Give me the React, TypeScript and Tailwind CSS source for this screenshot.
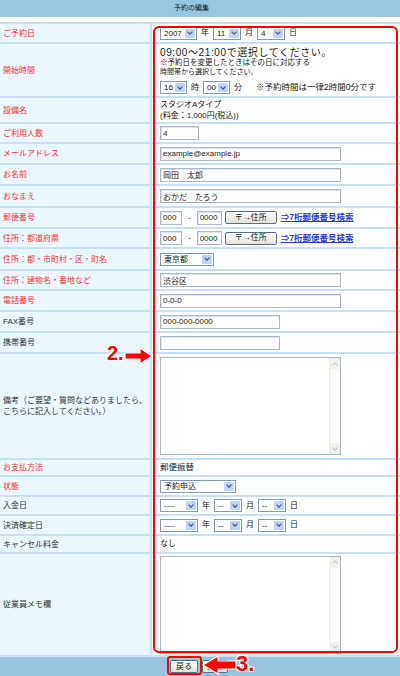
import React from 'react';

const FONT = "font-['Liberation_Sans','Noto_Sans_CJK_JP',sans-serif]";

function Sel({ w, v }: { w: string; v: string }) {
  return (
    <div className={`${w} h-[13px] flex items-stretch border border-[#7f9db9] bg-white shrink-0`}>
      <span className="flex-1 pl-[3px] text-[8px] leading-[11px] text-[#222] whitespace-nowrap overflow-hidden">{v}</span>
      <span className="w-[10px] m-px flex items-center justify-center bg-[#c3d3fb] rounded-[1px]">
        <svg width="6" height="4" viewBox="0 0 6 4">
          <path d="M0.6 0.6 L3 3.2 L5.4 0.6" stroke="#4b5f88" strokeWidth="1.3" fill="none" />
        </svg>
      </span>
    </div>
  );
}

function Inp({ w, v = '' }: { w: string; v?: string }) {
  return (
    <input
      readOnly
      value={v}
      className={`${w} h-[14px] px-[2px] border border-[#a7b8cc] shadow-[inset_1px_1px_0_#dde5ee] bg-white text-[8px] text-[#222] outline-none shrink-0`}
    />
  );
}

function Btn({ children, w }: { children: React.ReactNode; w: string }) {
  return (
    <div className={`${w} h-[13px] flex items-center justify-center rounded-[2px] border border-[#5a6f8e] bg-gradient-to-b from-white to-[#e4e2d6] text-[8px] text-[#222] shrink-0`}>
      {children}
    </div>
  );
}

function Unit({ t }: { t: string }) {
  return <span className="text-[8px] text-[#222] px-[4px]">{t}</span>;
}

function TextArea() {
  return (
    <div className="w-[181px] h-[98px] border border-[#a7b8cc] bg-white flex justify-end">
      <div className="w-[11px] h-full bg-[#fbfbf9] border-l border-[#eeeeea] flex flex-col justify-between">
        <div className="h-[11px] bg-[#f1f1ed] flex items-center justify-center">
          <svg width="6" height="4" viewBox="0 0 6 4"><path d="M0.6 3.4 L3 0.8 L5.4 3.4" stroke="#b9bcc4" strokeWidth="1" fill="none" /></svg>
        </div>
        <div className="h-[11px] bg-[#f1f1ed] flex items-center justify-center">
          <svg width="6" height="4" viewBox="0 0 6 4"><path d="M0.6 0.6 L3 3.2 L5.4 0.6" stroke="#b9bcc4" strokeWidth="1" fill="none" /></svg>
        </div>
      </div>
    </div>
  );
}

function Zip() {
  return (
    <div className="flex items-center">
      <Inp w="w-[22px]" v="000" />
      <span className="text-[8px] text-[#222] px-[6px]">-</span>
      <Inp w="w-[25px]" v="0000" />
      <div className="w-[3px]" />
      <Btn w="w-[52px]">〒→住所</Btn>
      <span className="ml-[4px] text-[8.5px] font-bold text-[#2a3be0] underline whitespace-nowrap">⇒7桁郵便番号検索</span>
    </div>
  );
}

function DateSel({ y, m, d, yw }: { y: string; m: string; d: string; yw: string }) {
  return (
    <div className="flex items-center">
      <Sel w={yw} v={y} />
      <Unit t="年" />
      <Sel w="w-[28px]" v={m} />
      <Unit t="月" />
      <Sel w="w-[28px]" v={d} />
      <Unit t="日" />
    </div>
  );
}

type Row = { label: React.ReactNode; red?: boolean; h: string; content: React.ReactNode };

const rows: Row[] = [
  { label: 'ご予約日', red: true, h: 'h-[18px]', content: <DateSel y="2007" m="11" d="4" yw="w-[37px]" /> },
  {
    label: '開始時間',
    red: true,
    h: 'h-[52px]',
    content: (
      <div className="flex flex-col self-start pt-[3px] text-[#222]">
        <div className="text-[10px] tracking-[0.6px] leading-[12px] whitespace-nowrap">09:00～21:00で選択してください。</div>
        <div className="text-[7.5px] leading-[8px] whitespace-nowrap">※予約日を変更したときはその日に対応する</div>
        <div className="text-[7px] leading-[10px] whitespace-nowrap">時間帯から選択してください。</div>
        <div className="flex items-center mt-[4px]">
          <Sel w="w-[27px]" v="16" />
          <Unit t="時" />
          <Sel w="w-[27px]" v="00" />
          <Unit t="分" />
          <span className="ml-[10px] text-[8.5px] whitespace-nowrap">※予約時間は一律2時間0分です</span>
        </div>
      </div>
    ),
  },
  {
    label: '設備名',
    red: true,
    h: 'h-[24px]',
    content: (
      <div className="text-[8px] leading-[11px] text-[#222]">
        <div>スタジオAタイプ</div>
        <div>(料金：1,000円(税込))</div>
      </div>
    ),
  },
  { label: 'ご利用人数', red: true, h: 'h-[18px]', content: <Inp w="w-[39px]" v="4" /> },
  { label: 'メールアドレス', red: true, h: 'h-[19px]', content: <Inp w="w-[181px]" v="example@example.jp" /> },
  { label: 'お名前', red: true, h: 'h-[19px]', content: <Inp w="w-[181px]" v="岡田　太郎" /> },
  { label: 'おなまえ', red: true, h: 'h-[20px]', content: <Inp w="w-[181px]" v="おかだ　たろう" /> },
  { label: '郵便番号', red: true, h: 'h-[19px]', content: <Zip /> },
  { label: '住所：都道府県', red: true, h: 'h-[18px]', content: <Zip /> },
  { label: '住所：都・市町村・区・町名', red: true, h: 'h-[20px]', content: <Sel w="w-[54px]" v="東京都" /> },
  { label: '住所：建物名・番地など', red: true, h: 'h-[18px]', content: <Inp w="w-[181px]" v="渋谷区" /> },
  { label: '電話番号', red: true, h: 'h-[19px]', content: <Inp w="w-[181px]" v="0-0-0" /> },
  { label: 'FAX番号', h: 'h-[19px]', content: <Inp w="w-[120px]" v="000-000-0000" /> },
  { label: '携帯番号', h: 'h-[19px]', content: <Inp w="w-[120px]" /> },
  {
    label: (
      <>
        備考（ご要望・質問などありましたら、
        <br />
        こちらに記入してください。）
      </>
    ),
    h: 'h-[104px]',
    content: <TextArea />,
  },
  { label: 'お支払方法', red: true, h: 'h-[15px]', content: <span className="text-[8.5px] text-[#222]">郵便振替</span> },
  { label: '状態', red: true, h: 'h-[18px]', content: <Sel w="w-[76px]" v="予約申込" /> },
  { label: '入金日', h: 'h-[17px]', content: <DateSel y="----" m="--" d="--" yw="w-[38px]" /> },
  { label: '決済確定日', h: 'h-[18px]', content: <DateSel y="----" m="--" d="--" yw="w-[38px]" /> },
  { label: 'キャンセル料金', h: 'h-[16px]', content: <span className="text-[8px] text-[#222]">なし</span> },
  { label: '従業員メモ欄', h: 'h-[101px]', content: <TextArea /> },
];

const OUTLINE = '[text-shadow:1px_1px_0_#fff,-1px_-1px_0_#fff,1px_-1px_0_#fff,-1px_1px_0_#fff,0_1px_0_#fff,0_-1px_0_#fff,1px_0_0_#fff,-1px_0_0_#fff]';

export default function App() {
  return (
    <div className={`relative w-[400px] h-[676px] overflow-hidden bg-white ${FONT}`}>
      <div className="h-[17px] bg-[#96c6e2] flex items-center justify-center pr-[17px]">
        <span className="text-[7px] text-[#222]">予約の編集</span>
      </div>
      <div className="h-[5px]" />

      <div className="flex flex-col gap-[2px] bg-[#c8e0f1] py-[2px]">
        {rows.map((r, i) => (
          <div key={i} className={`flex gap-[2px] ${r.h}`}>
            <div
              className={`w-[150px] shrink-0 bg-[#eaf7fd] flex items-center pl-[3px] text-[8px] leading-[11px] ${
                r.red ? 'text-[#f33]' : 'text-[#333]'
              }`}
            >
              <span>{r.label}</span>
            </div>
            <div className="flex-1 bg-white flex items-center pl-[8px]">{r.content}</div>
          </div>
        ))}
      </div>

      <div className="h-[19px] bg-[#96c5e0] flex items-center pl-[170px] gap-[4px]">
        <Btn w="w-[28px]">戻る</Btn>
        <Btn w="w-[26px]">変更</Btn>
      </div>

      {/* annotations */}
      <div className="absolute left-[153px] top-[26px] w-[245px] h-[627px] border-2 border-[#f00] rounded-[6px] pointer-events-none" />
      <div className="absolute left-[167px] top-[656px] w-[35px] h-[19px] border-2 border-[#f00] rounded-[3px] pointer-events-none" />

      <div className={`absolute left-[107px] top-[343px] text-[20px] leading-[20px] font-bold text-[#f00] ${OUTLINE}`}>2.</div>
      <svg className="absolute left-[124px] top-[346px]" width="30" height="20" viewBox="0 0 30 20">
        <polygon points="1,7 16,7 16,2 28,10 16,18 16,13 1,13" fill="#f00" stroke="#fff" strokeWidth="1.2" />
      </svg>

      <svg className="absolute left-[201px] top-[655px]" width="36" height="20" viewBox="0 0 36 20">
        <polygon points="35,6 17,6 17,1 2,10 17,19 17,14 35,14" fill="#f00" stroke="#fff" strokeWidth="1.2" />
      </svg>
      <div className={`absolute left-[236px] top-[653px] text-[22px] leading-[22px] font-bold text-[#f00] ${OUTLINE}`}>3.</div>
    </div>
  );
}
